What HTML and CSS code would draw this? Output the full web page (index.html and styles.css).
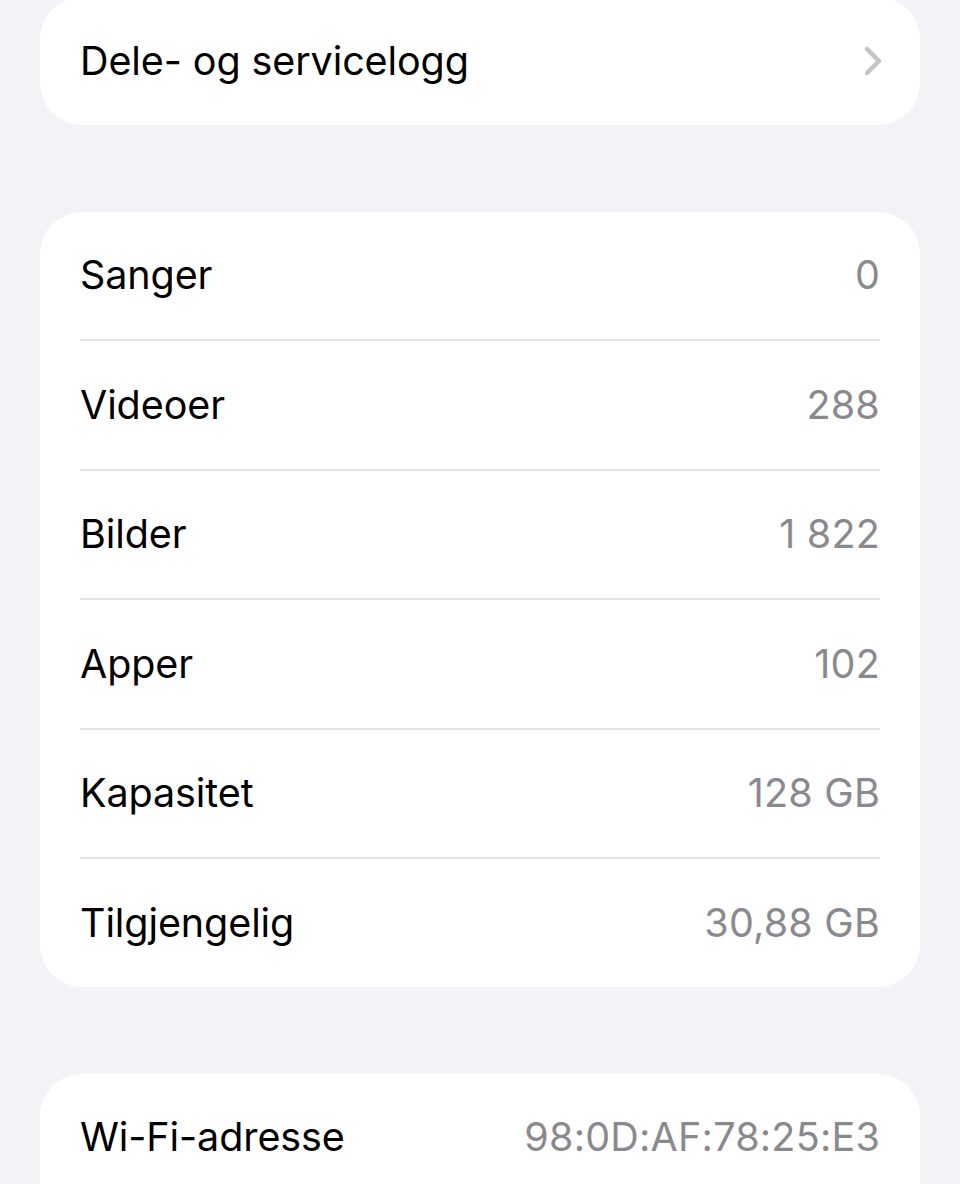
FILE: index.html
```html
<!DOCTYPE html>
<html lang="no">
<head>
<meta charset="utf-8">
<title>Om</title>
<link rel="stylesheet" href="styles.css">
</head>
<body>
<main class="page">
  <section class="card">
    <div class="row">
      <span class="label">Dele- og servicelogg</span>
      <svg class="chevron" width="22" height="32" viewBox="0 0 22 32" aria-hidden="true">
        <path d="M5 4 L17 16 L5 28" fill="none" stroke="#c4c4c7" stroke-width="4.5" stroke-linecap="round" stroke-linejoin="round"/>
      </svg>
    </div>
  </section>

  <section class="card">
    <div class="row"><span class="label">Sanger</span><span class="value">0</span></div>
    <div class="sep"></div>
    <div class="row"><span class="label">Videoer</span><span class="value">288</span></div>
    <div class="sep"></div>
    <div class="row"><span class="label">Bilder</span><span class="value">1 822</span></div>
    <div class="sep"></div>
    <div class="row"><span class="label">Apper</span><span class="value">102</span></div>
    <div class="sep"></div>
    <div class="row"><span class="label">Kapasitet</span><span class="value">128 GB</span></div>
    <div class="sep"></div>
    <div class="row"><span class="label">Tilgjengelig</span><span class="value">30,88 GB</span></div>
  </section>

  <section class="card card-last">
    <div class="row"><span class="label">Wi-Fi-adresse</span><span class="value">98:0D:AF:78:25:E3</span></div>
  </section>
</main>
</body>
</html>
```

FILE: styles.css
```css
html, body {
  margin: 0;
  padding: 0;
  background: #f2f2f7;
}

body {
  font-family: Inter, "Noto Sans", "Liberation Sans", sans-serif;
  -webkit-font-smoothing: antialiased;
  overflow: hidden;
  height: 1184px;
}

.page {
  display: flex;
  flex-direction: column;
  gap: 87px;
  padding: 0 40px;
  margin-top: -3px;
}

.card {
  background: #ffffff;
  border-radius: 42px;
  padding: 0 40px;
}

.card-last {
  padding-bottom: 40px;
}

.row {
  height: 127.5px;
  display: flex;
  align-items: center;
  justify-content: space-between;
}

.label {
  font-size: 39.5px;
  color: #000000;
  letter-spacing: -0.1px;
}

.value {
  font-size: 39.5px;
  color: #8a8a8e;
  letter-spacing: 0.2px;
}

.sep {
  height: 2px;
  background: #e3e3e6;
}

.chevron {
  margin-right: -4px;
}
```
